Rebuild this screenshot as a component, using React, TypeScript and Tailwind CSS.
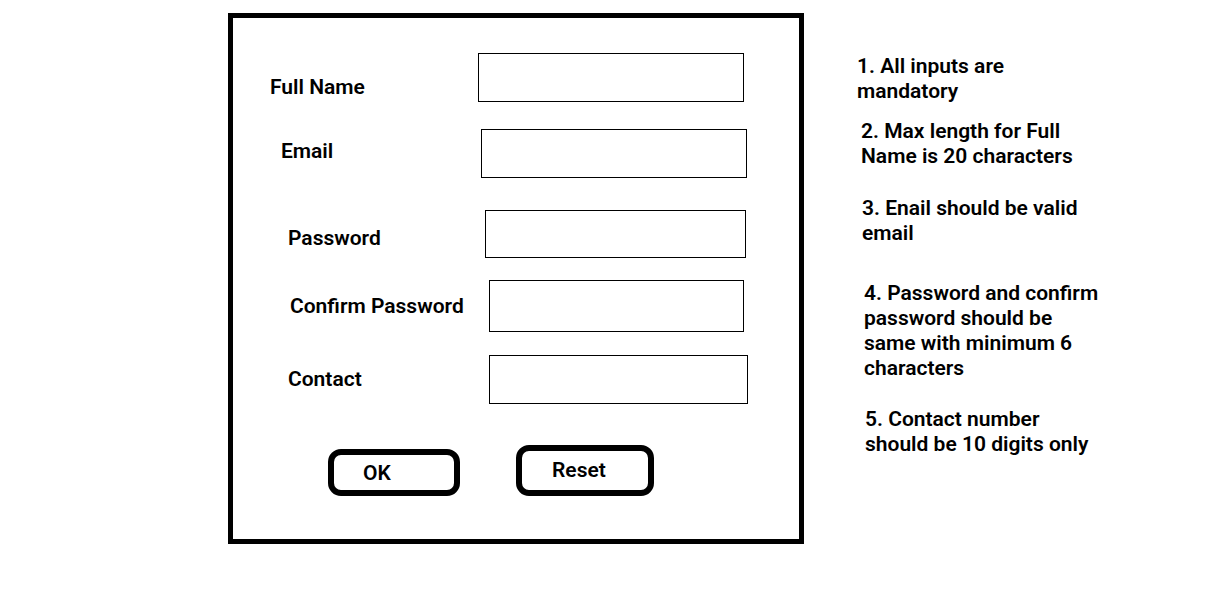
const rows = [
  { label: 'Full Name', gap: 'mt-[35px]', labelBox: 'w-[245px] pl-[37px] pt-[22px]', input: 'w-[266px] h-[49px]' },
  { label: 'Email', gap: 'mt-[27px]', labelBox: 'w-[248px] pl-[48px] pt-[10px]', input: 'w-[266px] h-[49px]' },
  { label: 'Password', gap: 'mt-[32px]', labelBox: 'w-[252px] pl-[55px] pt-[16px]', input: 'w-[261px] h-[48px]' },
  { label: 'Confirm Password', gap: 'mt-[22px]', labelBox: 'w-[256px] pl-[57px] pt-[14px]', input: 'w-[255px] h-[52px]' },
  { label: 'Contact', gap: 'mt-[23px]', labelBox: 'w-[256px] pl-[55px] pt-[12px]', input: 'w-[259px] h-[49px]' },
];

const notes = [
  { gap: 'mt-[54px] ml-[53px]', lines: ['1. All inputs are', 'mandatory'] },
  { gap: 'mt-[15px] ml-[57px]', lines: ['2. Max length for Full', 'Name is 20 characters'] },
  { gap: 'mt-[27px] ml-[58px]', lines: ['3. Enail should be valid', 'email'] },
  { gap: 'mt-[35px] ml-[60px]', lines: ['4. Password and confirm', 'password should be', 'same with minimum 6', 'characters'] },
  { gap: 'mt-[26px] ml-[61px]', lines: ['5. Contact number', 'should be 10 digits only'] },
];

export default function App() {
  return (
    <div className="flex h-[603px] w-[1221px] items-start bg-white font-['Roboto',sans-serif] text-[21px] font-semibold text-black">
      <div className="ml-[228px] mt-[13px] flex h-[531px] w-[576px] flex-col border-[5px] border-black">
        {rows.map((r) => (
          <div key={r.label} className={`flex items-start ${r.gap}`}>
            <div className={`${r.labelBox} leading-[24px]`}>{r.label}</div>
            <div className={`${r.input} border border-black`} />
          </div>
        ))}
        <div className="mt-[41px] flex items-start gap-[56px] pl-[95px]">
          <button className="mt-[4px] flex h-[47px] w-[132px] items-start rounded-[13px] border-[6px] border-black pl-[29px] pt-[6px] leading-[24px]">
            OK
          </button>
          <button className="flex h-[51px] w-[138px] items-start rounded-[13px] border-[6px] border-black pl-[30px] pt-[7px] leading-[24px]">
            Reset
          </button>
        </div>
      </div>
      <div className="flex flex-col leading-[25px]">
        {notes.map((n) => (
          <div key={n.lines[0]} className={n.gap}>
            {n.lines.map((l) => (
              <div key={l}>{l}</div>
            ))}
          </div>
        ))}
      </div>
    </div>
  );
}
